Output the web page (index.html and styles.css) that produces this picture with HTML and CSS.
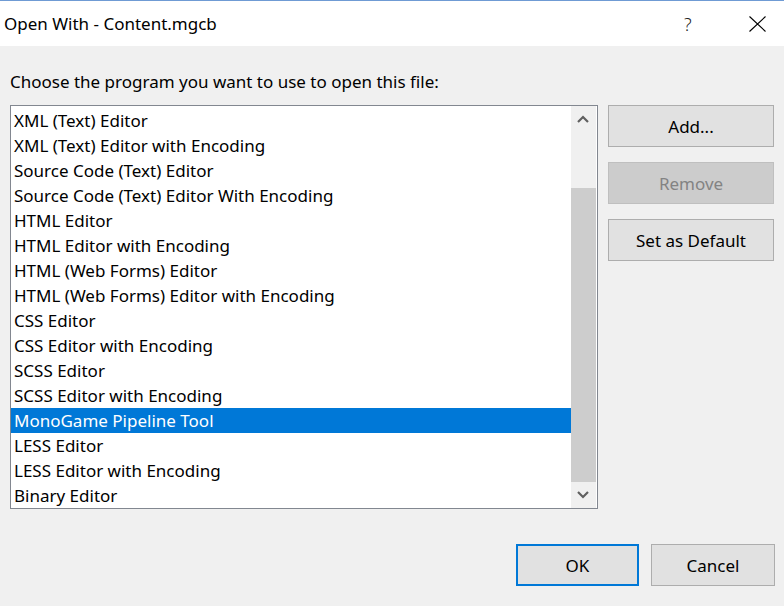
FILE: index.html
```html
<!DOCTYPE html>
<html>
<head>
<meta charset="utf-8">
<link rel="stylesheet" href="styles.css">
</head>
<body>
<div class="window">
  <div class="titlebar">
    <span class="title">Open With - Content.mgcb</span>
    <span class="help">?</span>
    <span class="close">
      <svg width="17" height="16" viewBox="0 0 17 16"><path d="M0.5 0.5 L16.5 15.5 M16.5 0.5 L0.5 15.5" stroke="#000" stroke-width="1.1" fill="none"/></svg>
    </span>
  </div>
  <div class="content">
    <div class="label">Choose the program you want to use to open this file:</div>
    <div class="main">
      <div class="listbox">
        <div class="rows">
          <div class="row">XML (Text) Editor</div>
          <div class="row">XML (Text) Editor with Encoding</div>
          <div class="row">Source Code (Text) Editor</div>
          <div class="row">Source Code (Text) Editor With Encoding</div>
          <div class="row">HTML Editor</div>
          <div class="row">HTML Editor with Encoding</div>
          <div class="row">HTML (Web Forms) Editor</div>
          <div class="row">HTML (Web Forms) Editor with Encoding</div>
          <div class="row">CSS Editor</div>
          <div class="row">CSS Editor with Encoding</div>
          <div class="row">SCSS Editor</div>
          <div class="row">SCSS Editor with Encoding</div>
          <div class="row selected">MonoGame Pipeline Tool</div>
          <div class="row">LESS Editor</div>
          <div class="row">LESS Editor with Encoding</div>
          <div class="row">Binary Editor</div>
        </div>
        <div class="scrollbar">
          <div class="sb-btn">
            <svg width="12" height="8" viewBox="0 0 12 8"><path d="M1 7 L6 2 L11 7" stroke="#606060" stroke-width="2.2" fill="none"/></svg>
          </div>
          <div class="sb-track"><div class="sb-thumb"></div></div>
          <div class="sb-btn">
            <svg width="12" height="8" viewBox="0 0 12 8"><path d="M1 1 L6 6 L11 1" stroke="#606060" stroke-width="2.2" fill="none"/></svg>
          </div>
        </div>
      </div>
      <div class="side">
        <button class="btn">Add...</button>
        <button class="btn disabled">Remove</button>
        <button class="btn">Set as Default</button>
      </div>
    </div>
    <div class="footer">
      <button class="btn ok">OK</button>
      <button class="btn cancel">Cancel</button>
    </div>
  </div>
</div>
</body>
</html>
```
FILE: styles.css
```css
* { box-sizing: border-box; }
html, body {
  margin: 0;
  padding: 0;
  width: 784px;
  height: 606px;
  overflow: hidden;
  background: #f0f0f0;
}
body {
  font-family: "Noto Sans", "Open Sans", sans-serif;
  font-size: 17px;
  color: #000;
}
.window {
  width: 784px;
  height: 606px;
  border-top: 1px solid #6f9bd4;
  background: #f0f0f0;
  display: flex;
  flex-direction: column;
}
.titlebar {
  height: 45px;
  background: #fff;
  display: flex;
  align-items: center;
  flex-shrink: 0;
}
.title {
  padding-left: 4px;
  font-size: 17px;
  flex: 1;
}
.help {
  font-size: 18px;
  font-weight: 300;
  color: #222;
  width: 20px;
  margin-right: 45px;
}
.close {
  display: flex;
  margin-right: 18px;
}
.content {
  flex: 1;
  display: flex;
  flex-direction: column;
}
.label {
  padding: 25px 0 0 10px;
  line-height: 22px;
  height: 59px;
}
.main {
  display: flex;
  padding-left: 10px;
  gap: 10px;
}
.listbox {
  width: 588px;
  height: 404px;
  border: 1px solid #828790;
  background: #fff;
  display: flex;
  overflow: hidden;
  padding-right: 1px;
}
.rows {
  width: 560px;
  padding-top: 2px;
}
.row {
  height: 25px;
  line-height: 25px;
  padding-left: 3px;
  white-space: nowrap;
}
.row.selected {
  background: #0078d7;
  color: #fff;
}
.scrollbar {
  width: 25px;
  background: #f0f0f0;
  display: flex;
  flex-direction: column;
}
.sb-btn {
  height: 26px;
  display: flex;
  align-items: center;
  justify-content: center;
  padding-right: 1px;
}
.sb-track {
  flex: 1;
  padding-top: 56px;
  display: flex;
  flex-direction: column;
}
.sb-thumb {
  flex: 1;
  background: #cdcdcd;
}
.side {
  display: flex;
  flex-direction: column;
  gap: 15px;
}
.btn {
  font: inherit;
  width: 166px;
  height: 42px;
  background: #e1e1e1;
  border: 1px solid #adadad;
  color: #000;
  padding: 0;
  margin: 0;
}
.btn.disabled {
  background: #cccccc;
  border-color: #bfbfbf;
  color: #838383;
}
.footer {
  display: flex;
  justify-content: flex-end;
  gap: 12px;
  padding-right: 9px;
  margin-top: 35px;
}
.btn.ok {
  width: 123px;
  border: 2px solid #0078d7;
}
.btn.cancel {
  width: 124px;
}
```
